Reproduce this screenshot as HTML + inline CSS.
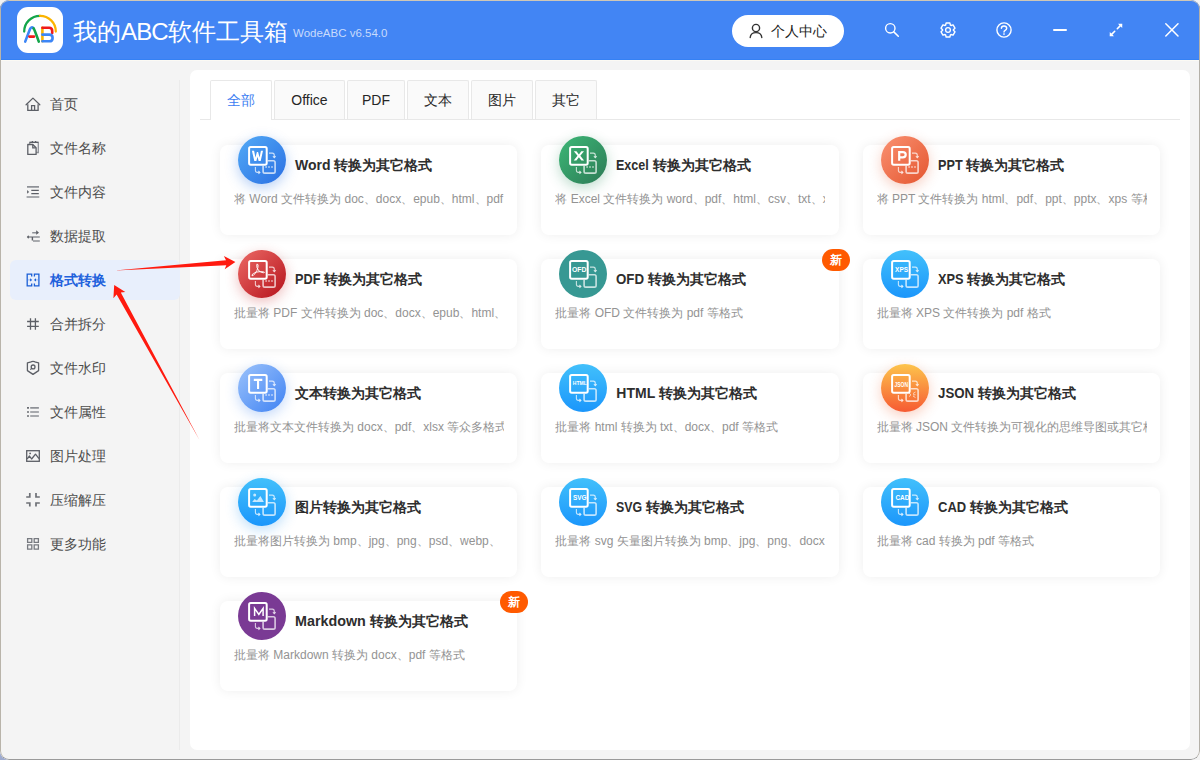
<!DOCTYPE html>
<html><head><meta charset="utf-8">
<style>
*{margin:0;padding:0;box-sizing:border-box}
html,body{width:1200px;height:760px;overflow:hidden;background:#f3f3f3;font-family:"Liberation Sans",sans-serif}
.win{position:absolute;left:0;top:0;width:1200px;height:760px;border-radius:9px;background:#f4f4f4;overflow:hidden}
.frame{position:absolute;left:0;top:0;width:1200px;height:760px;border-radius:9px;border:1px solid #aaa;border-top-color:#cfc7b6;border-left-color:#b9b4aa;border-right-color:#b4b0a8;border-bottom-color:#9a9a9a;pointer-events:none}
.cbl{position:absolute;left:0;top:748px;width:12px;height:12px;background:#9eabcf}
.title{position:absolute;left:0;top:0;width:1200px;height:60px;background:#4285f4}
.abs{position:absolute}
.divider{position:absolute;left:179px;top:80px;width:1px;height:670px;background:#ebebeb}
.nav{position:absolute;left:10px;width:170px;height:40px;border-radius:6px}
.nav.act{background:#e8effc}
.nav svg{position:absolute;left:12px;top:10px}
.nav span{position:absolute;left:40px;top:0;line-height:40px;font-size:14px;color:#4d4d4d;white-space:nowrap}
.nav.act span{color:#1f62dc;font-weight:bold}
.panel{position:absolute;left:190px;top:70px;width:1000px;height:680px;background:#fff;border-radius:7px}
.tabs{position:absolute;left:10px;top:49px;width:980px;height:1px;background:#e8e8e8}
.tab{position:absolute;top:10px;height:39px;border:1px solid #e8e8e8;border-bottom:none;border-radius:2px 2px 0 0;background:#fafafa;font-size:14px;color:#262626;text-align:center;line-height:39px;white-space:nowrap}
.tab.act{background:#fff;color:#3d7ef2;height:40px}
.card{position:absolute;width:297.4px;height:90px;background:#fff;border-radius:8px;box-shadow:0 0 12px rgba(0,0,0,0.07)}
.ic{position:absolute;left:18px;top:-9px;width:48px;height:48px;border-radius:50%}
.ic svg{position:absolute;left:0;top:0}
.ct{position:absolute;left:75px;top:10px;font-size:14px;font-weight:bold;color:#2e2e2e;line-height:20px;white-space:nowrap}
.cd{position:absolute;left:14px;top:44px;width:270px;overflow:hidden;font-size:12px;color:#939393;line-height:20px;white-space:nowrap}
.badge{position:absolute;right:-11px;top:-10px;width:28px;height:22px;border-radius:11px;background:#ff5a00;color:#fff;font-size:12px;font-weight:bold;text-align:center;line-height:22px}
</style></head><body>
<div class="cbl"></div>
<div class="win">
  <div class="title">
    <svg class="abs" style="left:17px;top:7px" width="46" height="46" viewBox="0 0 46 46">
      <rect x="0" y="0" width="46" height="46" rx="11" fill="#fff"/>
      <path d="M7.2 24.6 A15.8 15.8 0 0 1 23 8.8" stroke="#13a54a" stroke-width="2.3" fill="none" stroke-linecap="round"/>
      <path d="M23 8.8 A15.8 15.8 0 0 1 38.8 24.6" stroke="#fbb400" stroke-width="2.3" fill="none" stroke-linecap="round"/>
      <path d="M8.2 34.6 L12.9 22.3 Q14.4 19 16.6 21.3" stroke="#3d86f6" stroke-width="2.6" fill="none" stroke-linecap="round"/>
      <path d="M16.6 21.3 Q17.4 22.2 21.8 34.6" stroke="#13a54a" stroke-width="2.6" fill="none" stroke-linecap="round"/>
      <path d="M12.4 29.6 L17 29.6" stroke="#f01a1a" stroke-width="2.6" stroke-linecap="round"/>
      <path d="M25.4 20.8 L25.4 34.3" stroke="#fbb400" stroke-width="2.6" stroke-linecap="round"/>
      <path d="M25.4 20.8 L32.2 20.8 Q35.2 20.8 35.2 24 L35.2 26" stroke="#f01a1a" stroke-width="2.6" fill="none" stroke-linecap="round"/>
      <path d="M25.4 27.6 L32.4 27.6 Q35.6 27.6 35.6 30.9 Q35.6 34.3 32.4 34.3 L25.4 34.3" stroke="#3d86f6" stroke-width="2.6" fill="none" stroke-linecap="round"/>
    </svg>
    <div class="abs" style="left:73px;top:16px;font-size:24px;color:#fff;line-height:32px;white-space:nowrap">我的<span style="letter-spacing:-0.85px">ABC</span>软件工具箱</div>
    <div class="abs" style="left:293px;top:25px;font-size:11.5px;color:#c8dbfc;line-height:16px;white-space:nowrap">WodeABC v6.54.0</div>
    <div class="abs" style="left:732px;top:15px;width:112px;height:32px;border-radius:16px;background:#fff">
      <svg class="abs" style="left:17px;top:8px" width="14" height="16" viewBox="0 0 14 16"><circle cx="7" cy="5" r="3.6" stroke="#333" stroke-width="1.4" fill="none"/><path d="M1.2 14.5 Q1.5 9.6 7 9.6 Q12.5 9.6 12.8 14.5" stroke="#333" stroke-width="1.4" fill="none" stroke-linecap="round"/></svg>
      <div class="abs" style="left:39px;top:0;line-height:32px;font-size:14px;color:#222;white-space:nowrap">个人中心</div>
    </div>
    <svg class="abs" style="left:879px;top:17px" width="26" height="26" viewBox="0 0 26 26"><circle cx="11.3" cy="11.3" r="4.7" stroke="#fff" stroke-width="1.4" fill="none"/><path d="M14.8 14.9 L19.3 19.3" stroke="#fff" stroke-width="1.5" stroke-linecap="round"/></svg>
    <svg class="abs" style="left:935px;top:17px" width="26" height="26" viewBox="0 0 26 26"><path d="M10.55 8.19 L11.14 6.05 L14.86 6.05 L15.45 8.19 L15.94 8.47 L18.09 7.91 L19.95 11.14 L18.39 12.72 L18.39 13.28 L19.95 14.86 L18.09 18.09 L15.94 17.53 L15.45 17.81 L14.86 19.95 L11.14 19.95 L10.55 17.81 L10.06 17.53 L7.91 18.09 L6.05 14.86 L7.61 13.28 L7.61 12.72 L6.05 11.14 L7.91 7.91 L10.06 8.47Z" stroke="#fff" stroke-width="1.4" fill="none" stroke-linejoin="round"/><circle cx="13" cy="13" r="2.4" stroke="#fff" stroke-width="1.3" fill="none"/></svg>
    <svg class="abs" style="left:991px;top:17px" width="26" height="26" viewBox="0 0 26 26"><circle cx="13" cy="13" r="7.1" stroke="#fff" stroke-width="1.4" fill="none"/><path d="M10.4 11.3 Q10.4 9 13 9 Q15.7 9 15.7 11.3 Q15.7 12.5 14.2 13.3 Q13 14 13 15" stroke="#fff" stroke-width="1.4" fill="none" stroke-linecap="round"/><rect x="12.25" y="16.3" width="1.5" height="1.5" fill="#fff"/></svg>
    <div class="abs" style="left:1053px;top:29px;width:14px;height:2px;background:#fff;border-radius:1px"></div>
    <svg class="abs" style="left:1103px;top:17px" width="26" height="26" viewBox="0 0 26 26"><path d="M19.3 6.7 L15 6.8 L19.2 11 Z M6.7 19.3 L6.8 15 L11 19.2 Z" fill="#fff"/><path d="M17.6 8.4 L14.3 11.7 M8.4 17.6 L11.7 14.3" stroke="#fff" stroke-width="1.6" stroke-linecap="round"/></svg>
    <svg class="abs" style="left:1159px;top:17px" width="26" height="26" viewBox="0 0 26 26"><path d="M6.8 6.8 L19 19 M19 6.8 L6.8 19" stroke="#fff" stroke-width="1.5" stroke-linecap="round"/></svg>
  </div>

  <div class="abs" style="left:0;top:59px;width:1200px;height:1px;background:#3581f4"></div><div class="abs" style="left:0;top:60px;width:1200px;height:1px;background:#fcfaf4"></div>
  <div class="divider"></div>
<div class="nav" style="top:84px"><svg width="24" height="24" viewBox="0 0 24 24"><path d="M4.1 10.7 L10.95 4.1 L17.8 10.7" stroke="#5c5f66" stroke-width="1.3" fill="none" stroke-linecap="round" stroke-linejoin="round"/><path d="M5.8 10.2 L5.8 16.4 L16.1 16.4 L16.1 10.2 M9.6 16.4 L9.6 11.7 L12.6 11.7 L12.6 16.4" stroke="#5c5f66" stroke-width="1.3" fill="none"/></svg><span>首页</span></div>
<div class="nav" style="top:128px"><svg width="24" height="24" viewBox="0 0 24 24"><path d="M7.7 6.3 L7.7 4.4 L16.3 4.4 L16.3 14.5 L14.2 14.5" stroke="#8e9197" stroke-width="1.3" fill="none"/><path d="M10.4 3.1 L10.4 4.6 M13.6 3.1 L13.6 4.6 M7.7 4.4 L16.3 4.4" stroke="#5c5f66" stroke-width="1.3" fill="none"/><path d="M5.8 6.5 L10.8 6.5 L14.1 9.8 L14.1 16.4 L5.8 16.4 Z" stroke="#5c5f66" stroke-width="1.3" fill="none" stroke-linejoin="round"/><path d="M10.8 6.8 L10.8 9.8 L13.8 9.8" stroke="#5c5f66" stroke-width="1.3" fill="none"/></svg><span>文件名称</span></div>
<div class="nav" style="top:172px"><svg width="24" height="24" viewBox="0 0 24 24"><path d="M5 4.9 L17 4.9 M4.6 15 L17.3 15" stroke="#8e9197" stroke-width="1.6"/><path d="M9.3 8.4 L16.8 8.4 M9.3 11.6 L16.8 11.6" stroke="#5c5f66" stroke-width="1.4"/><path d="M5.1 8 L7.1 9.9 L5.1 11.8 Z" fill="#5c5f66"/></svg><span>文件内容</span></div>
<div class="nav" style="top:216px"><svg width="24" height="24" viewBox="0 0 24 24"><path d="M10.2 6.7 L14.6 6.7" stroke="#8e9197" stroke-width="1.6"/><path d="M14.2 4.3 L17 6.7 L14.2 8.7 Z" fill="#5c5f66"/><path d="M6.5 11 L17.8 11 M11 15 L17.8 15" stroke="#8e9197" stroke-width="1.6"/><path d="M10.4 11 L10.4 14.6" stroke="#5c5f66" stroke-width="1.4"/><path d="M4.8 11 L6.4 9.3 L7.2 11 L6.4 12.7 Z" fill="#5c5f66"/></svg><span>数据提取</span></div>
<div class="nav act" style="top:260px"><svg width="24" height="24" viewBox="0 0 24 24"><path d="M9.7 6.6 L9.7 4.2 L5.2 4.2 L5.2 15.8 L9.7 15.8 L9.7 13.4 M12.4 6.6 L12.4 4.2 L16.9 4.2 L16.9 15.8 L12.4 15.8 L12.4 13.4" stroke="#1a5fd6" stroke-width="1.3" fill="none"/><path d="M6 9.9 L8.5 9.9 M13.6 9.9 L16.1 9.9" stroke="#8fb2ee" stroke-width="0.9"/><path d="M8.1 8.2 L10.2 9.9 L8.1 11.6 Z M14 8.2 L11.9 9.9 L14 11.6 Z" fill="#1a5fd6"/></svg><span>格式转换</span></div>
<div class="nav" style="top:304px"><svg width="24" height="24" viewBox="0 0 24 24"><path d="M8.5 4.3 L8.5 15.7 M13.4 4.3 L13.4 15.7 M5.1 7.5 L16.8 7.5 M5.1 12.4 L16.8 12.4" stroke="#5c5f66" stroke-width="1.3"/></svg><span>合并拆分</span></div>
<div class="nav" style="top:348px"><svg width="24" height="24" viewBox="0 0 24 24"><path d="M5.4 4.8 L8.2 4.2 Q9.7 3.3 11 3.3 Q12.3 3.3 13.8 4.2 L16.6 4.8 L16.6 12.6 L11 16.4 L5.4 12.6 Z" stroke="#5c5f66" stroke-width="1.3" fill="none" stroke-linejoin="round"/><circle cx="11.1" cy="8.9" r="1.9" stroke="#5c5f66" stroke-width="1.3" fill="none"/><path d="M9.8 10.3 L8.3 11.6" stroke="#5c5f66" stroke-width="1.2"/></svg><span>文件水印</span></div>
<div class="nav" style="top:392px"><svg width="24" height="24" viewBox="0 0 24 24"><path d="M5.1 5.9 L6.9 5.9 M5.1 10 L6.9 10 M5.1 14 L6.9 14" stroke="#5c5f66" stroke-width="1.7"/><path d="M8.2 5.9 L16.9 5.9 M8.2 10 L16.9 10 M8.2 14 L16.9 14" stroke="#8e9197" stroke-width="1.6"/></svg><span>文件属性</span></div>
<div class="nav" style="top:436px"><svg width="24" height="24" viewBox="0 0 24 24"><rect x="4.7" y="4.7" width="12.6" height="10.6" stroke="#5c5f66" stroke-width="1.3" fill="none"/><path d="M5.2 12.9 L7.5 10 L9.6 13 L13.5 8.2 L17 12.6" stroke="#5c5f66" stroke-width="1.3" fill="none" stroke-linejoin="round"/><circle cx="8.1" cy="7.4" r="0.9" fill="#5c5f66"/></svg><span>图片处理</span></div>
<div class="nav" style="top:480px"><svg width="24" height="24" viewBox="0 0 24 24"><path d="M7.8 3 L7.8 7 L4.2 7 M14 3 L14 7 L17.8 7 M4.2 13 L7.8 13 L7.8 16.6 M17.8 13 L14 13 L14 16.6" stroke="#6d7076" stroke-width="1.7" fill="none"/></svg><span>压缩解压</span></div>
<div class="nav" style="top:524px"><svg width="24" height="24" viewBox="0 0 24 24"><path d="M5.6 4.6 L9.8 4.6 L9.8 8.3 L5.6 8.3 Z M12.2 4.6 L16.4 4.6 L16.4 8.3 L12.2 8.3 Z M5.6 10.8 L9.8 10.8 L9.8 15.2 L5.6 15.2 Z M12.2 10.8 L16.4 10.8 L16.4 15.2 L12.2 15.2 Z" stroke="#777a80" stroke-width="1.3" fill="none"/></svg><span>更多功能</span></div>

  <div class="panel">
    <div class="tabs"></div>
    <div class="tab act" style="left:20px;width:62px">全部</div>
    <div class="tab" style="left:84px;width:71px">Office</div>
    <div class="tab" style="left:157px;width:58px">PDF</div>
    <div class="tab" style="left:217px;width:62px">文本</div>
    <div class="tab" style="left:281px;width:62px">图片</div>
    <div class="tab" style="left:345px;width:62px">其它</div>
  </div>
<div class="card" style="left:220.0px;top:145px"><div class="ic" style="background:linear-gradient(135deg,#52aaf6,#2a6fe3);box-shadow:0 4px 13px rgba(50,120,230,0.35)"><svg width="48" height="48" viewBox="0 0 48 48"><path d="M29.7 24.8 L35.4 24.8 Q37.1 24.8 37.1 26.5 L37.1 35.4 Q37.1 37.1 35.4 37.1 L26.8 37.1 Q25.1 37.1 25.1 35.4 L25.1 29.7" stroke="rgba(255,255,255,0.72)" stroke-width="1.6" fill="none"/><rect x="27.35" y="30.25" width="1.5" height="1.5" fill="rgba(255,255,255,0.72)"/><rect x="30.25" y="30.25" width="1.5" height="1.5" fill="rgba(255,255,255,0.72)"/><rect x="33.25" y="30.25" width="1.5" height="1.5" fill="rgba(255,255,255,0.72)"/><path d="M31 17.1 L34.4 17.1 Q36.3 17.1 36.3 19.2 L36.3 21.4" stroke="rgba(255,255,255,0.72)" stroke-width="1.1" fill="none"/><path d="M34.9 20.2 L36.3 21.7 L37.7 20.2" stroke="rgba(255,255,255,0.72)" stroke-width="1.1" fill="none"/><path d="M17.4 31 L17.4 34.5 Q17.4 36.4 19.4 36.4 L21.6 36.4" stroke="rgba(255,255,255,0.72)" stroke-width="1.1" fill="none"/><path d="M20.4 35 L21.9 36.4 L20.4 37.8" stroke="rgba(255,255,255,0.72)" stroke-width="1.1" fill="none"/><rect x="11.1" y="11.1" width="17.6" height="17.6" rx="1.6" stroke="#fff" stroke-width="2" fill="none"/><path d="M13.9 14.8 L16.1 14.8 L17.4 21.4 L18.9 15.9 L20.1 15.9 L21.6 21.4 L22.9 14.8 L25 14.8 L22.7 25 L20.6 25 L19.5 20.7 L18.4 25 L16.3 25 Z" fill="#fff"/></svg></div><div class="ct">Word 转换为其它格式</div><div class="cd">将 Word 文件转换为 doc、docx、epub、html、pdf、txt</div></div>
<div class="card" style="left:541.33px;top:145px"><div class="ic" style="background:linear-gradient(135deg,#3db877,#2c7a55);box-shadow:0 4px 13px rgba(40,140,90,0.3)"><svg width="48" height="48" viewBox="0 0 48 48"><path d="M29.7 24.8 L35.4 24.8 Q37.1 24.8 37.1 26.5 L37.1 35.4 Q37.1 37.1 35.4 37.1 L26.8 37.1 Q25.1 37.1 25.1 35.4 L25.1 29.7" stroke="rgba(255,255,255,0.72)" stroke-width="1.6" fill="none"/><rect x="27.35" y="30.25" width="1.5" height="1.5" fill="rgba(255,255,255,0.72)"/><rect x="30.25" y="30.25" width="1.5" height="1.5" fill="rgba(255,255,255,0.72)"/><rect x="33.25" y="30.25" width="1.5" height="1.5" fill="rgba(255,255,255,0.72)"/><path d="M31 17.1 L34.4 17.1 Q36.3 17.1 36.3 19.2 L36.3 21.4" stroke="rgba(255,255,255,0.72)" stroke-width="1.1" fill="none"/><path d="M34.9 20.2 L36.3 21.7 L37.7 20.2" stroke="rgba(255,255,255,0.72)" stroke-width="1.1" fill="none"/><path d="M17.4 31 L17.4 34.5 Q17.4 36.4 19.4 36.4 L21.6 36.4" stroke="rgba(255,255,255,0.72)" stroke-width="1.1" fill="none"/><path d="M20.4 35 L21.9 36.4 L20.4 37.8" stroke="rgba(255,255,255,0.72)" stroke-width="1.1" fill="none"/><rect x="11.1" y="11.1" width="17.6" height="17.6" rx="1.6" stroke="#fff" stroke-width="2" fill="none"/><path d="M14.8 15.2 L17.5 15.2 L19.9 18.5 L22.3 15.2 L25 15.2 L21.3 19.85 L25.1 24.6 L22.4 24.6 L19.9 21.2 L17.4 24.6 L14.7 24.6 L18.5 19.85 Z" fill="#fff"/></svg></div><div class="ct"><span style="display:inline-block;transform:scaleX(0.8961);transform-origin:0 0;margin-right:-3.80px">Excel</span> 转换为其它格式</div><div class="cd">将 Excel 文件转换为 word、pdf、html、csv、txt、xls</div></div>
<div class="card" style="left:862.66px;top:145px"><div class="ic" style="background:linear-gradient(135deg,#fa9272,#e4552f);box-shadow:0 4px 13px rgba(230,100,60,0.3)"><svg width="48" height="48" viewBox="0 0 48 48"><path d="M29.7 24.8 L35.4 24.8 Q37.1 24.8 37.1 26.5 L37.1 35.4 Q37.1 37.1 35.4 37.1 L26.8 37.1 Q25.1 37.1 25.1 35.4 L25.1 29.7" stroke="rgba(255,255,255,0.72)" stroke-width="1.6" fill="none"/><rect x="27.35" y="30.25" width="1.5" height="1.5" fill="rgba(255,255,255,0.72)"/><rect x="30.25" y="30.25" width="1.5" height="1.5" fill="rgba(255,255,255,0.72)"/><rect x="33.25" y="30.25" width="1.5" height="1.5" fill="rgba(255,255,255,0.72)"/><path d="M31 17.1 L34.4 17.1 Q36.3 17.1 36.3 19.2 L36.3 21.4" stroke="rgba(255,255,255,0.72)" stroke-width="1.1" fill="none"/><path d="M34.9 20.2 L36.3 21.7 L37.7 20.2" stroke="rgba(255,255,255,0.72)" stroke-width="1.1" fill="none"/><path d="M17.4 31 L17.4 34.5 Q17.4 36.4 19.4 36.4 L21.6 36.4" stroke="rgba(255,255,255,0.72)" stroke-width="1.1" fill="none"/><path d="M20.4 35 L21.9 36.4 L20.4 37.8" stroke="rgba(255,255,255,0.72)" stroke-width="1.1" fill="none"/><rect x="11.1" y="11.1" width="17.6" height="17.6" rx="1.6" stroke="#fff" stroke-width="2" fill="none"/><path d="M18.2 24.8 L18.2 16.2 L21.8 16.2 Q24.7 16.2 24.7 18.75 Q24.7 21.3 21.8 21.3 L18.2 21.3" stroke="#fff" stroke-width="2.2" fill="none"/></svg></div><div class="ct"><span style="display:inline-block;transform:scaleX(0.9045);transform-origin:0 0;margin-right:-2.60px">PPT</span> 转换为其它格式</div><div class="cd">将 PPT 文件转换为 html、pdf、ppt、pptx、xps 等格式</div></div>
<div class="card" style="left:220.0px;top:259px"><div class="ic" style="background:linear-gradient(135deg,#ec6a66,#b5121b);box-shadow:0 4px 13px rgba(200,40,40,0.3)"><svg width="48" height="48" viewBox="0 0 48 48"><path d="M29.7 24.8 L35.4 24.8 Q37.1 24.8 37.1 26.5 L37.1 35.4 Q37.1 37.1 35.4 37.1 L26.8 37.1 Q25.1 37.1 25.1 35.4 L25.1 29.7" stroke="rgba(255,255,255,0.72)" stroke-width="1.6" fill="none"/><rect x="27.35" y="30.25" width="1.5" height="1.5" fill="rgba(255,255,255,0.72)"/><rect x="30.25" y="30.25" width="1.5" height="1.5" fill="rgba(255,255,255,0.72)"/><rect x="33.25" y="30.25" width="1.5" height="1.5" fill="rgba(255,255,255,0.72)"/><path d="M31 17.1 L34.4 17.1 Q36.3 17.1 36.3 19.2 L36.3 21.4" stroke="rgba(255,255,255,0.72)" stroke-width="1.1" fill="none"/><path d="M34.9 20.2 L36.3 21.7 L37.7 20.2" stroke="rgba(255,255,255,0.72)" stroke-width="1.1" fill="none"/><path d="M17.4 31 L17.4 34.5 Q17.4 36.4 19.4 36.4 L21.6 36.4" stroke="rgba(255,255,255,0.72)" stroke-width="1.1" fill="none"/><path d="M20.4 35 L21.9 36.4 L20.4 37.8" stroke="rgba(255,255,255,0.72)" stroke-width="1.1" fill="none"/><rect x="11.1" y="11.1" width="17.6" height="17.6" rx="1.6" stroke="#fff" stroke-width="2" fill="none"/><path d="M19.2 13.9 Q20.6 14.2 19.9 17.6 Q19.3 20.5 17 23.6 Q15 26.3 14 25.7 Q13.2 25 15.6 23.4 Q18.5 21.6 22.5 21.6 Q26.6 21.7 26.5 22.4 Q26.3 23.1 23.4 22.4 Q20.5 21.5 19 17.8 Q18.4 14 19.2 13.9 Z" stroke="#fff" stroke-width="0.95" fill="none"/></svg></div><div class="ct"><span style="display:inline-block;transform:scaleX(0.9071);transform-origin:0 0;margin-right:-2.60px">PDF</span> 转换为其它格式</div><div class="cd">批量将 PDF 文件转换为 doc、docx、epub、html、txt</div></div>
<div class="card" style="left:541.33px;top:259px"><div class="ic" style="background:#379893;box-shadow:0 4px 13px rgba(40,140,130,0.0)"><svg width="48" height="48" viewBox="0 0 48 48"><path d="M29.7 24.8 L35.4 24.8 Q37.1 24.8 37.1 26.5 L37.1 35.4 Q37.1 37.1 35.4 37.1 L26.8 37.1 Q25.1 37.1 25.1 35.4 L25.1 29.7" stroke="rgba(255,255,255,0.72)" stroke-width="1.6" fill="none"/><path d="M31 17.1 L34.4 17.1 Q36.3 17.1 36.3 19.2 L36.3 21.4" stroke="rgba(255,255,255,0.72)" stroke-width="1.1" fill="none"/><path d="M34.9 20.2 L36.3 21.7 L37.7 20.2" stroke="rgba(255,255,255,0.72)" stroke-width="1.1" fill="none"/><path d="M17.4 31 L17.4 34.5 Q17.4 36.4 19.4 36.4 L21.6 36.4" stroke="rgba(255,255,255,0.72)" stroke-width="1.1" fill="none"/><path d="M20.4 35 L21.9 36.4 L20.4 37.8" stroke="rgba(255,255,255,0.72)" stroke-width="1.1" fill="none"/><rect x="11.1" y="11.1" width="17.6" height="17.6" rx="1.6" stroke="#fff" stroke-width="2" fill="none"/><text x="20.25" y="21.8" text-anchor="middle" font-family="Liberation Sans" font-weight="bold" font-size="7.8" textLength="14.5" lengthAdjust="spacingAndGlyphs" fill="#fff">OFD</text></svg></div><div class="ct"><span style="display:inline-block;transform:scaleX(0.9493);transform-origin:0 0;margin-right:-1.50px">OFD</span> 转换为其它格式</div><div class="cd">批量将 OFD 文件转换为 pdf 等格式</div><div class="badge">新</div></div>
<div class="card" style="left:862.66px;top:259px"><div class="ic" style="background:linear-gradient(180deg,#42c0fb,#1b96fb);box-shadow:0 4px 13px rgba(40,150,240,0.0)"><svg width="48" height="48" viewBox="0 0 48 48"><path d="M29.7 24.8 L35.4 24.8 Q37.1 24.8 37.1 26.5 L37.1 35.4 Q37.1 37.1 35.4 37.1 L26.8 37.1 Q25.1 37.1 25.1 35.4 L25.1 29.7" stroke="rgba(255,255,255,0.72)" stroke-width="1.6" fill="none"/><path d="M31 17.1 L34.4 17.1 Q36.3 17.1 36.3 19.2 L36.3 21.4" stroke="rgba(255,255,255,0.72)" stroke-width="1.1" fill="none"/><path d="M34.9 20.2 L36.3 21.7 L37.7 20.2" stroke="rgba(255,255,255,0.72)" stroke-width="1.1" fill="none"/><path d="M17.4 31 L17.4 34.5 Q17.4 36.4 19.4 36.4 L21.6 36.4" stroke="rgba(255,255,255,0.72)" stroke-width="1.1" fill="none"/><path d="M20.4 35 L21.9 36.4 L20.4 37.8" stroke="rgba(255,255,255,0.72)" stroke-width="1.1" fill="none"/><rect x="11.1" y="11.1" width="17.6" height="17.6" rx="1.6" stroke="#fff" stroke-width="2" fill="none"/><text x="20.6" y="21.8" text-anchor="middle" font-family="Liberation Sans" font-weight="bold" font-size="7.4" textLength="13" lengthAdjust="spacingAndGlyphs" fill="#fff">XPS</text></svg></div><div class="ct"><span style="display:inline-block;transform:scaleX(0.9108);transform-origin:0 0;margin-right:-2.50px">XPS</span> 转换为其它格式</div><div class="cd">批量将 XPS 文件转换为 pdf 格式</div></div>
<div class="card" style="left:220.0px;top:373px"><div class="ic" style="background:linear-gradient(135deg,#9cc3fb,#3f82f3);box-shadow:0 4px 13px rgba(60,130,240,0.3)"><svg width="48" height="48" viewBox="0 0 48 48"><path d="M29.7 24.8 L35.4 24.8 Q37.1 24.8 37.1 26.5 L37.1 35.4 Q37.1 37.1 35.4 37.1 L26.8 37.1 Q25.1 37.1 25.1 35.4 L25.1 29.7" stroke="rgba(255,255,255,0.72)" stroke-width="1.6" fill="none"/><rect x="27.35" y="30.25" width="1.5" height="1.5" fill="rgba(255,255,255,0.72)"/><rect x="30.25" y="30.25" width="1.5" height="1.5" fill="rgba(255,255,255,0.72)"/><rect x="33.25" y="30.25" width="1.5" height="1.5" fill="rgba(255,255,255,0.72)"/><path d="M31 17.1 L34.4 17.1 Q36.3 17.1 36.3 19.2 L36.3 21.4" stroke="rgba(255,255,255,0.72)" stroke-width="1.1" fill="none"/><path d="M34.9 20.2 L36.3 21.7 L37.7 20.2" stroke="rgba(255,255,255,0.72)" stroke-width="1.1" fill="none"/><path d="M17.4 31 L17.4 34.5 Q17.4 36.4 19.4 36.4 L21.6 36.4" stroke="rgba(255,255,255,0.72)" stroke-width="1.1" fill="none"/><path d="M20.4 35 L21.9 36.4 L20.4 37.8" stroke="rgba(255,255,255,0.72)" stroke-width="1.1" fill="none"/><rect x="11.1" y="11.1" width="17.6" height="17.6" rx="1.6" stroke="#fff" stroke-width="2" fill="none"/><path d="M15.8 15.9 L24.3 15.9 M20.05 15.9 L20.05 25" stroke="#fff" stroke-width="2.1" fill="none"/></svg></div><div class="ct">文本转换为其它格式</div><div class="cd">批量将文本文件转换为 docx、pdf、xlsx 等众多格式</div></div>
<div class="card" style="left:541.33px;top:373px"><div class="ic" style="background:linear-gradient(180deg,#42c0fb,#1b96fb);box-shadow:0 4px 13px rgba(40,150,240,0.0)"><svg width="48" height="48" viewBox="0 0 48 48"><path d="M29.7 24.8 L35.4 24.8 Q37.1 24.8 37.1 26.5 L37.1 35.4 Q37.1 37.1 35.4 37.1 L26.8 37.1 Q25.1 37.1 25.1 35.4 L25.1 29.7" stroke="rgba(255,255,255,0.72)" stroke-width="1.6" fill="none"/><path d="M31 17.1 L34.4 17.1 Q36.3 17.1 36.3 19.2 L36.3 21.4" stroke="rgba(255,255,255,0.72)" stroke-width="1.1" fill="none"/><path d="M34.9 20.2 L36.3 21.7 L37.7 20.2" stroke="rgba(255,255,255,0.72)" stroke-width="1.1" fill="none"/><path d="M17.4 31 L17.4 34.5 Q17.4 36.4 19.4 36.4 L21.6 36.4" stroke="rgba(255,255,255,0.72)" stroke-width="1.1" fill="none"/><path d="M20.4 35 L21.9 36.4 L20.4 37.8" stroke="rgba(255,255,255,0.72)" stroke-width="1.1" fill="none"/><rect x="11.1" y="11.1" width="17.6" height="17.6" rx="1.6" stroke="#fff" stroke-width="2" fill="none"/><text x="20.8" y="20.8" text-anchor="middle" font-family="Liberation Sans" font-weight="bold" font-size="5.3" textLength="13.9" lengthAdjust="spacingAndGlyphs" fill="#fff">HTML</text></svg></div><div class="ct">HTML 转换为其它格式</div><div class="cd">批量将 html 转换为 txt、docx、pdf 等格式</div></div>
<div class="card" style="left:862.66px;top:373px"><div class="ic" style="background:linear-gradient(180deg,#fdc44c,#f65a32);box-shadow:0 4px 13px rgba(240,100,50,0.3)"><svg width="48" height="48" viewBox="0 0 48 48"><path d="M29.7 24.8 L35.4 24.8 Q37.1 24.8 37.1 26.5 L37.1 35.4 Q37.1 37.1 35.4 37.1 L26.8 37.1 Q25.1 37.1 25.1 35.4 L25.1 29.7" stroke="rgba(255,255,255,0.72)" stroke-width="1.6" fill="none"/><path d="M28 29 L30 30.8 L28 32.6 M34.5 28 L32 29.6 M34.5 30.8 L32 30.8 M34.5 33.6 L32 32" stroke="rgba(255,255,255,0.72)" stroke-width="0.9" fill="none"/><path d="M31 17.1 L34.4 17.1 Q36.3 17.1 36.3 19.2 L36.3 21.4" stroke="rgba(255,255,255,0.72)" stroke-width="1.1" fill="none"/><path d="M34.9 20.2 L36.3 21.7 L37.7 20.2" stroke="rgba(255,255,255,0.72)" stroke-width="1.1" fill="none"/><path d="M17.4 31 L17.4 34.5 Q17.4 36.4 19.4 36.4 L21.6 36.4" stroke="rgba(255,255,255,0.72)" stroke-width="1.1" fill="none"/><path d="M20.4 35 L21.9 36.4 L20.4 37.8" stroke="rgba(255,255,255,0.72)" stroke-width="1.1" fill="none"/><rect x="11.1" y="11.1" width="17.6" height="17.6" rx="1.6" stroke="#fff" stroke-width="2" fill="none"/><text x="20.3" y="22.7" text-anchor="middle" font-family="Liberation Sans" font-weight="bold" font-size="7.4" textLength="13.6" lengthAdjust="spacingAndGlyphs" fill="#fff">JSON</text></svg></div><div class="ct"><span style="display:inline-block;transform:scaleX(0.9475);transform-origin:0 0;margin-right:-2.00px">JSON</span> 转换为其它格式</div><div class="cd">批量将 JSON 文件转换为可视化的思维导图或其它格式</div></div>
<div class="card" style="left:220.0px;top:487px"><div class="ic" style="background:linear-gradient(180deg,#42c0fb,#1b96fb);box-shadow:0 4px 13px rgba(40,150,240,0.3)"><svg width="48" height="48" viewBox="0 0 48 48"><path d="M29.7 24.8 L35.4 24.8 Q37.1 24.8 37.1 26.5 L37.1 35.4 Q37.1 37.1 35.4 37.1 L26.8 37.1 Q25.1 37.1 25.1 35.4 L25.1 29.7" stroke="rgba(255,255,255,0.72)" stroke-width="1.6" fill="none"/><path d="M31 17.1 L34.4 17.1 Q36.3 17.1 36.3 19.2 L36.3 21.4" stroke="rgba(255,255,255,0.72)" stroke-width="1.1" fill="none"/><path d="M34.9 20.2 L36.3 21.7 L37.7 20.2" stroke="rgba(255,255,255,0.72)" stroke-width="1.1" fill="none"/><path d="M17.4 31 L17.4 34.5 Q17.4 36.4 19.4 36.4 L21.6 36.4" stroke="rgba(255,255,255,0.72)" stroke-width="1.1" fill="none"/><path d="M20.4 35 L21.9 36.4 L20.4 37.8" stroke="rgba(255,255,255,0.72)" stroke-width="1.1" fill="none"/><rect x="11.1" y="11.1" width="17.6" height="17.6" rx="1.6" stroke="#fff" stroke-width="2" fill="none"/><path d="M14.2 23.9 L16.6 21.1 L18.9 22.5 L22.4 18 L25.9 23.9 Z" fill="rgba(255,255,255,0.72)"/><circle cx="16.7" cy="17.1" r="1.5" fill="rgba(255,255,255,0.72)"/></svg></div><div class="ct">图片转换为其它格式</div><div class="cd">批量将图片转换为 bmp、jpg、png、psd、webp、</div></div>
<div class="card" style="left:541.33px;top:487px"><div class="ic" style="background:linear-gradient(180deg,#42c0fb,#1b96fb);box-shadow:0 4px 13px rgba(40,150,240,0.0)"><svg width="48" height="48" viewBox="0 0 48 48"><path d="M29.7 24.8 L35.4 24.8 Q37.1 24.8 37.1 26.5 L37.1 35.4 Q37.1 37.1 35.4 37.1 L26.8 37.1 Q25.1 37.1 25.1 35.4 L25.1 29.7" stroke="rgba(255,255,255,0.72)" stroke-width="1.6" fill="none"/><path d="M31 17.1 L34.4 17.1 Q36.3 17.1 36.3 19.2 L36.3 21.4" stroke="rgba(255,255,255,0.72)" stroke-width="1.1" fill="none"/><path d="M34.9 20.2 L36.3 21.7 L37.7 20.2" stroke="rgba(255,255,255,0.72)" stroke-width="1.1" fill="none"/><path d="M17.4 31 L17.4 34.5 Q17.4 36.4 19.4 36.4 L21.6 36.4" stroke="rgba(255,255,255,0.72)" stroke-width="1.1" fill="none"/><path d="M20.4 35 L21.9 36.4 L20.4 37.8" stroke="rgba(255,255,255,0.72)" stroke-width="1.1" fill="none"/><rect x="11.1" y="11.1" width="17.6" height="17.6" rx="1.6" stroke="#fff" stroke-width="2" fill="none"/><text x="20.7" y="21.8" text-anchor="middle" font-family="Liberation Sans" font-weight="bold" font-size="7.8" textLength="13.6" lengthAdjust="spacingAndGlyphs" fill="#fff">SVG</text></svg></div><div class="ct"><span style="display:inline-block;transform:scaleX(0.8851);transform-origin:0 0;margin-right:-3.40px">SVG</span> 转换为其它格式</div><div class="cd">批量将 svg 矢量图片转换为 bmp、jpg、png、docx</div></div>
<div class="card" style="left:862.66px;top:487px"><div class="ic" style="background:linear-gradient(180deg,#42c0fb,#1b96fb);box-shadow:0 4px 13px rgba(40,150,240,0.0)"><svg width="48" height="48" viewBox="0 0 48 48"><path d="M29.7 24.8 L35.4 24.8 Q37.1 24.8 37.1 26.5 L37.1 35.4 Q37.1 37.1 35.4 37.1 L26.8 37.1 Q25.1 37.1 25.1 35.4 L25.1 29.7" stroke="rgba(255,255,255,0.72)" stroke-width="1.6" fill="none"/><path d="M31 17.1 L34.4 17.1 Q36.3 17.1 36.3 19.2 L36.3 21.4" stroke="rgba(255,255,255,0.72)" stroke-width="1.1" fill="none"/><path d="M34.9 20.2 L36.3 21.7 L37.7 20.2" stroke="rgba(255,255,255,0.72)" stroke-width="1.1" fill="none"/><path d="M17.4 31 L17.4 34.5 Q17.4 36.4 19.4 36.4 L21.6 36.4" stroke="rgba(255,255,255,0.72)" stroke-width="1.1" fill="none"/><path d="M20.4 35 L21.9 36.4 L20.4 37.8" stroke="rgba(255,255,255,0.72)" stroke-width="1.1" fill="none"/><rect x="11.1" y="11.1" width="17.6" height="17.6" rx="1.6" stroke="#fff" stroke-width="2" fill="none"/><text x="21.4" y="21.8" text-anchor="middle" font-family="Liberation Sans" font-weight="bold" font-size="7.8" textLength="13.9" lengthAdjust="spacingAndGlyphs" fill="#fff">CAD</text></svg></div><div class="ct"><span style="display:inline-block;transform:scaleX(0.9275);transform-origin:0 0;margin-right:-2.20px">CAD</span> 转换为其它格式</div><div class="cd">批量将 cad 转换为 pdf 等格式</div></div>
<div class="card" style="left:220.0px;top:601px"><div class="ic" style="background:#7a3a94;box-shadow:0 4px 13px rgba(120,60,150,0.0)"><svg width="48" height="48" viewBox="0 0 48 48"><path d="M29.7 24.8 L35.4 24.8 Q37.1 24.8 37.1 26.5 L37.1 35.4 Q37.1 37.1 35.4 37.1 L26.8 37.1 Q25.1 37.1 25.1 35.4 L25.1 29.7" stroke="rgba(255,255,255,0.72)" stroke-width="1.6" fill="none"/><path d="M31 17.1 L34.4 17.1 Q36.3 17.1 36.3 19.2 L36.3 21.4" stroke="rgba(255,255,255,0.72)" stroke-width="1.1" fill="none"/><path d="M34.9 20.2 L36.3 21.7 L37.7 20.2" stroke="rgba(255,255,255,0.72)" stroke-width="1.1" fill="none"/><path d="M17.4 31 L17.4 34.5 Q17.4 36.4 19.4 36.4 L21.6 36.4" stroke="rgba(255,255,255,0.72)" stroke-width="1.1" fill="none"/><path d="M20.4 35 L21.9 36.4 L20.4 37.8" stroke="rgba(255,255,255,0.72)" stroke-width="1.1" fill="none"/><rect x="11.1" y="11.1" width="17.6" height="17.6" rx="1.6" stroke="#fff" stroke-width="2" fill="none"/><path d="M16.6 24 L16.6 16.4 L20.85 22.4 L25.1 16.4 L25.1 24" stroke="#fff" stroke-width="1.5" fill="none" stroke-linejoin="miter"/></svg></div><div class="ct"><span style="display:inline-block;transform:scaleX(1.0231);transform-origin:0 0;margin-right:1.60px">Markdown</span> 转换为其它格式</div><div class="cd">批量将 Markdown 转换为 docx、pdf 等格式</div><div class="badge">新</div></div>

  <svg class="abs" style="left:0;top:0" width="1200" height="760" viewBox="0 0 1200 760">
    <path d="M115 270.5 L226.0 260.3 L223.9 256.0 L235.4 262.1 L224.7 269.3 L226.3 265.3 Z" fill="#ff1a0f"/>
    <path d="M199.5 440 L116.6 294.6 L113.4 298.3 L114.2 285.1 L125.3 291.9 L120.8 292.5 Z" fill="#ff1a0f"/>
  </svg>
  <div class="frame"></div>
</div>
</body></html>
